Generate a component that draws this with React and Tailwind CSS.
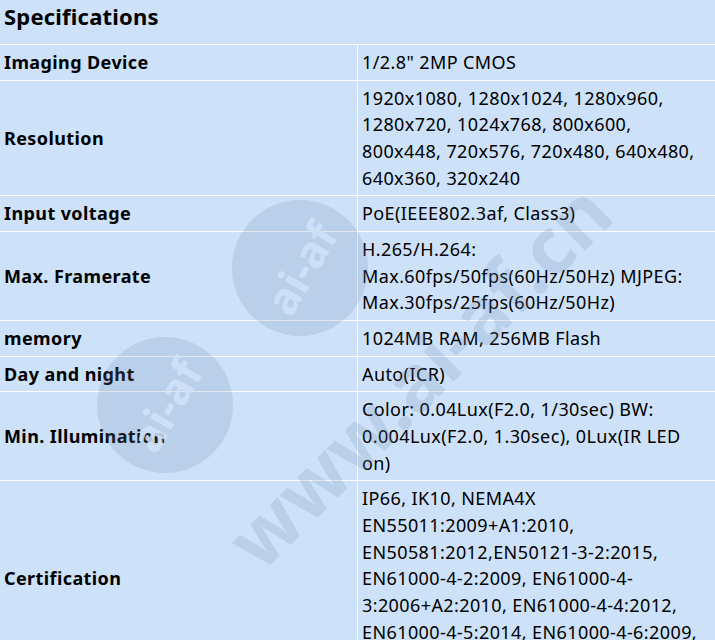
import React from "react";

const rows = [
  ["Imaging Device", ['1/2.8" 2MP CMOS']],
  ["Resolution", ["1920x1080, 1280x1024, 1280x960,", "1280x720, 1024x768, 800x600,", "800x448, 720x576, 720x480, 640x480,", "640x360, 320x240"]],
  ["Input voltage", ["PoE(IEEE802.3af, Class3)"]],
  ["Max. Framerate", ["H.265/H.264:", "Max.60fps/50fps(60Hz/50Hz) MJPEG:", "Max.30fps/25fps(60Hz/50Hz)"]],
  ["memory", ["1024MB RAM, 256MB Flash"]],
  ["Day and night", ["Auto(ICR)"]],
  ["Min. Illumination", ["Color: 0.04Lux(F2.0, 1/30sec) BW:", "0.004Lux(F2.0, 1.30sec), 0Lux(IR LED", "on)"]],
  ["Certification", ["IP66, IK10, NEMA4X", "EN55011:2009+A1:2010,", "EN50581:2012,EN50121-3-2:2015,", "EN61000-4-2:2009, EN61000-4-", "3:2006+A2:2010, EN61000-4-4:2012,", "EN61000-4-5:2014, EN61000-4-6:2009,", "EN61000-4-8:2010"]],
];

function Badge() {
  return (
    <div className="flex h-[136px] w-[136px] items-center justify-center rounded-full bg-[rgba(110,135,170,0.2)]">
      <span className="-rotate-[60deg] text-[44px] font-bold text-[rgba(210,228,250,0.85)]">ai-af</span>
    </div>
  );
}

function Watermark() {
  return (
    <div className="pointer-events-none absolute inset-0 overflow-hidden">
      <div className="absolute left-[232px] top-[200px]">
        <Badge />
      </div>
      <div className="absolute left-[97px] top-[337px]">
        <Badge />
      </div>
      <div className="absolute left-[418px] top-[375px] h-0 w-0">
        <div className="absolute left-0 top-0 -translate-x-1/2 -translate-y-1/2 -rotate-45 whitespace-nowrap text-[78px] font-bold leading-none text-[rgba(110,135,170,0.2)]">
          www.ai-af.cn
        </div>
      </div>
    </div>
  );
}

export default function App() {
  return (
    <div className="relative h-[640px] w-[715px] overflow-hidden bg-[#cde1f9] text-black [font-family:'Noto_Sans',sans-serif]">
      <div className="flex h-[45px] items-center border-b border-white pl-[4px] pb-[12px] text-[22px] font-bold tracking-[0.2px]">
        Specifications
      </div>
      <div className="grid grid-cols-[358px_1fr]">
        {rows.map(([label, lines]) => (
          <React.Fragment key={label}>
            <div className="flex items-center border-b border-r border-white py-[4px] pl-[4px] text-[18px] font-bold leading-[26.67px] tracking-[0.4px]">
              {label}
            </div>
            <div className="border-b border-white py-[4px] pl-[4px] text-[18px] leading-[26.67px] tracking-[0.4px]">
              {lines.map((l, i) => (
                <div key={i} className="whitespace-nowrap">{l}</div>
              ))}
            </div>
          </React.Fragment>
        ))}
      </div>
      <Watermark />
    </div>
  );
}
